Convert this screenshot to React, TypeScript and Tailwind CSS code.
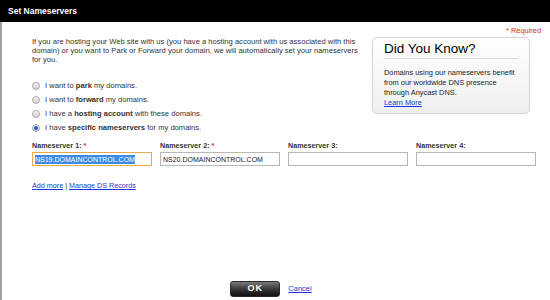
import React from "react";

function Radio({ checked }: { checked?: boolean }) {
  return (
    <span className="w-[8px] h-[8px] rounded-full border border-[#a8a8a8] bg-gradient-to-b from-[#f4f4f4] to-[#d0d0d0] flex items-center justify-center shrink-0">
      {checked && <span className="w-[4px] h-[4px] rounded-full bg-[#1f5fd1]" />}
    </span>
  );
}

function RadioRow({ children, checked }: { children: React.ReactNode; checked?: boolean }) {
  return (
    <div className="h-[14px] flex items-center gap-[5px] text-[7.6px] text-[#333]">
      <Radio checked={checked} />
      <span>{children}</span>
    </div>
  );
}

function Field({ label, req, value, active }: { label: string; req?: boolean; value?: string; active?: boolean }) {
  return (
    <div className="w-[120px] flex flex-col">
      <div className="h-[9px] leading-[9px] text-[7.2px] font-bold text-[#333]">
        {label}
        {req && <span className="text-[#e02020]"> *</span>}
      </div>
      <div
        className={
          "mt-[2px] h-[14px] flex items-center px-[2px] bg-white " +
          (active ? "border border-[#e3a84e]" : "border border-[#b8b8b8]")
        }
      >
        {value && (
          <span
            className={
              "text-[7px] leading-[9px] " + (active ? "bg-[#3b8be6] text-white" : "text-[#222]")
            }
          >
            {value}
          </span>
        )}
      </div>
    </div>
  );
}

export default function App() {
  return (
    <div className="w-[550px] h-[300px] bg-white flex flex-col overflow-hidden font-['Liberation_Sans',Arial,sans-serif]">
      <div className="h-[22px] bg-black flex items-center pl-[8px] text-white font-bold text-[8.5px] shrink-0">
        Set Nameservers
      </div>
      <div className="flex-1 border-l-2 border-[#a0a0a0] flex flex-col pl-[30px]">
        <div className="flex">
          <div className="w-[335px] pt-[15px]">
            <p className="text-[7.6px] leading-[9px] text-[#333] whitespace-nowrap">
              If you are hosting your Web site with us (you have a hosting account with us associated with this
              <br />
              domain) or you want to Park or Forward your domain, we will automatically set your nameservers
              <br />
              for you.
            </p>
            <div className="mt-[15px] flex flex-col">
              <RadioRow>
                I want to <b>park</b> my domains.
              </RadioRow>
              <RadioRow>
                I want to <b>forward</b> my domains.
              </RadioRow>
              <RadioRow>
                I have a <b>hosting account</b> with these domains.
              </RadioRow>
              <RadioRow checked>
                I have <b>specific nameservers</b> for my domains.
              </RadioRow>
            </div>
          </div>
          <div className="ml-auto flex flex-col items-end pr-[9px] pt-[4px]">
            <div className="text-[7.4px] leading-[9px] text-[#e02020]">* Required</div>
            <div className="mt-[2px] mr-[11px] w-[158px] h-[77px] rounded-[5px] border border-[#d4d4d4] bg-gradient-to-b from-white to-[#efefef] pl-[11px] pr-[11px] pt-[3px]">
              <div className="text-[13.5px] leading-[16px] text-black">Did You Know?</div>
              <div className="mt-[1px] h-px bg-[#d8d8d8]" />
              <div className="mt-[9px] text-[7.4px] leading-[10px] text-[#222] whitespace-nowrap">
                Domains using our nameservers benefit
                <br />
                from our worldwide DNS presence
                <br />
                through Anycast DNS.
                <br />
                <a className="text-[#2233dd] underline">Learn More</a>
              </div>
            </div>
          </div>
        </div>
        <div className="mt-[6px] flex gap-[8px]">
          <Field label="Nameserver 1:" req value="NS19.DOMAINCONTROL.COM" active />
          <Field label="Nameserver 2:" req value="NS20.DOMAINCONTROL.COM" />
          <Field label="Nameserver 3:" />
          <Field label="Nameserver 4:" />
        </div>
        <div className="mt-[15px] text-[7.2px] leading-[9px] text-[#333]">
          <a className="text-[#2233dd] underline">Add more</a> |{" "}
          <a className="text-[#2233dd] underline">Manage DS Records</a>
        </div>
        <div className="mt-auto flex justify-center items-center gap-[8px] pb-[3px] pr-[40px]">
          <div className="w-[50px] h-[16px] rounded-[3px] border border-[#2a2a2a] bg-gradient-to-b from-[#7a7a7a] via-[#3a3a3a] to-[#111] flex items-center justify-center text-white font-bold text-[9px] tracking-[1px]">
            OK
          </div>
          <a className="text-[#2233dd] underline text-[7.5px]">Cancel</a>
        </div>
      </div>
    </div>
  );
}
